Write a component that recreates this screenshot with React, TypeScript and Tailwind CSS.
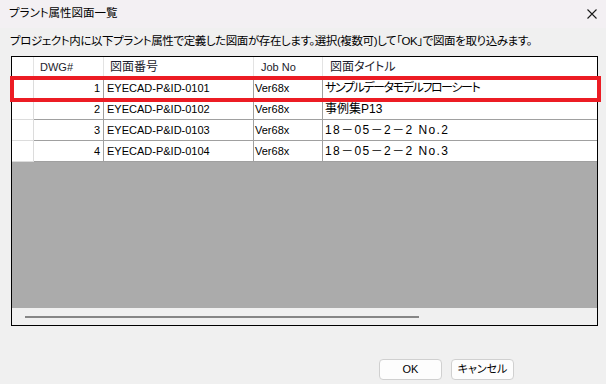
import React from 'react'

type Row = { no: number; code: string; job: string; title: string; titleClass: string }

const rows: Row[] = [
  { no: 1, code: 'EYECAD-P&ID-0101', job: 'Ver68x', title: 'サンプルデータモデルフローシート', titleClass: 'tracking-[-1.4px]' },
  { no: 2, code: 'EYECAD-P&ID-0102', job: 'Ver68x', title: '事例集P13', titleClass: '' },
  { no: 3, code: 'EYECAD-P&ID-0103', job: 'Ver68x', title: '18－05－2－2 No.2', titleClass: 'tracking-[1.4px]' },
  { no: 4, code: 'EYECAD-P&ID-0104', job: 'Ver68x', title: '18－05－2－2 No.3', titleClass: 'tracking-[1.4px]' },
]

const font = "font-['Liberation_Sans','Noto_Sans_CJK_JP',sans-serif] [font-feature-settings:'palt']"

const App = () => {
  return (
    <div className={`relative w-[606px] h-[384px] overflow-hidden bg-[#f0f0f0] text-black ${font}`}>
      {/* タイトルバー */}
      <div className="flex h-[28px] items-center justify-between bg-[#f3f0f3] pl-[9px] pr-[8px]">
        <span className="text-[11.5px] leading-none">プラント属性図面一覧</span>
        <svg width="10" height="10" viewBox="0 0 10 10" className="mr-[1px]">
          <path d="M0.5 0.5 L9.5 9.5 M9.5 0.5 L0.5 9.5" stroke="#1a1a1a" strokeWidth="1.1" fill="none" />
        </svg>
      </div>

      {/* 説明 */}
      <div className="h-[28px] pl-[10px] pt-[5px] text-[11.5px] leading-[16px] tracking-[-0.4px] whitespace-nowrap">
        プロジェクト内に以下プラント属性で定義した図面が存在します。選択(複数可)して「OK」で図面を取り込みます。
      </div>

      {/* 一覧 */}
      <div className="ml-[11px] flex h-[270px] w-[587px] flex-col border border-black bg-white">
        <div className="flex h-[21px] shrink-0 border-b border-[#e3e3e3] text-[11px] text-[#1c1c2c]">
          <div className="w-[22px] border-r border-[#e3e3e3]" />
          <div className="flex w-[70px] items-center border-r border-[#e3e3e3] pl-[6px]">DWG#</div>
          <div className="flex w-[150px] items-center border-r border-[#e3e3e3] pl-[6px] text-[12px]">図面番号</div>
          <div className="flex w-[69px] items-center border-r border-[#e3e3e3] pl-[7px]">Job No</div>
          <div className="flex flex-1 items-center pl-[7px] text-[12px]">図面タイトル</div>
        </div>

        {rows.map((r) => (
          <div key={r.no} className="flex h-[21px] shrink-0 text-[11px]">
            <div className="w-[22px] border-b border-r border-[#dcdcdc]" />
            <div className="flex w-[70px] items-center justify-end border-b border-r border-[#a0a0a0] pr-[3px]">{r.no}</div>
            <div className="flex w-[150px] items-center border-b border-r border-[#a0a0a0] pl-[3px]">{r.code}</div>
            <div className="flex w-[69px] items-center border-b border-r border-[#a0a0a0] pl-[1px]">{r.job}</div>
            <div className={`flex flex-1 items-center border-b border-[#a0a0a0] pl-[2px] text-[12px] whitespace-pre ${r.titleClass}`}>{r.title}</div>
          </div>
        ))}

        <div className="flex-1 bg-[#ababab]" />

        <div className="flex h-[17px] shrink-0 items-center bg-[#f0f0f0] pl-[13px]">
          <div className="h-[2px] w-[394px] bg-[#868686]" />
        </div>
      </div>

      {/* ボタン */}
      <div className="mt-[33px] flex justify-end gap-[9px] pr-[92px]">
        <button className="flex h-[21px] w-[63px] items-center justify-center rounded-[4px] border border-[#d0d0d0] bg-[#fdfdfd] text-[11px]">OK</button>
        <button className="flex h-[21px] w-[63px] items-center justify-center rounded-[4px] border border-[#d0d0d0] bg-[#fdfdfd] text-[11px]">キャンセル</button>
      </div>

      {/* 選択行の赤枠 */}
      <div className="absolute left-[10px] top-[76px] h-[26px] w-[591px] border-[4px] border-[#ec1c24]" />
    </div>
  )
}

export default App
